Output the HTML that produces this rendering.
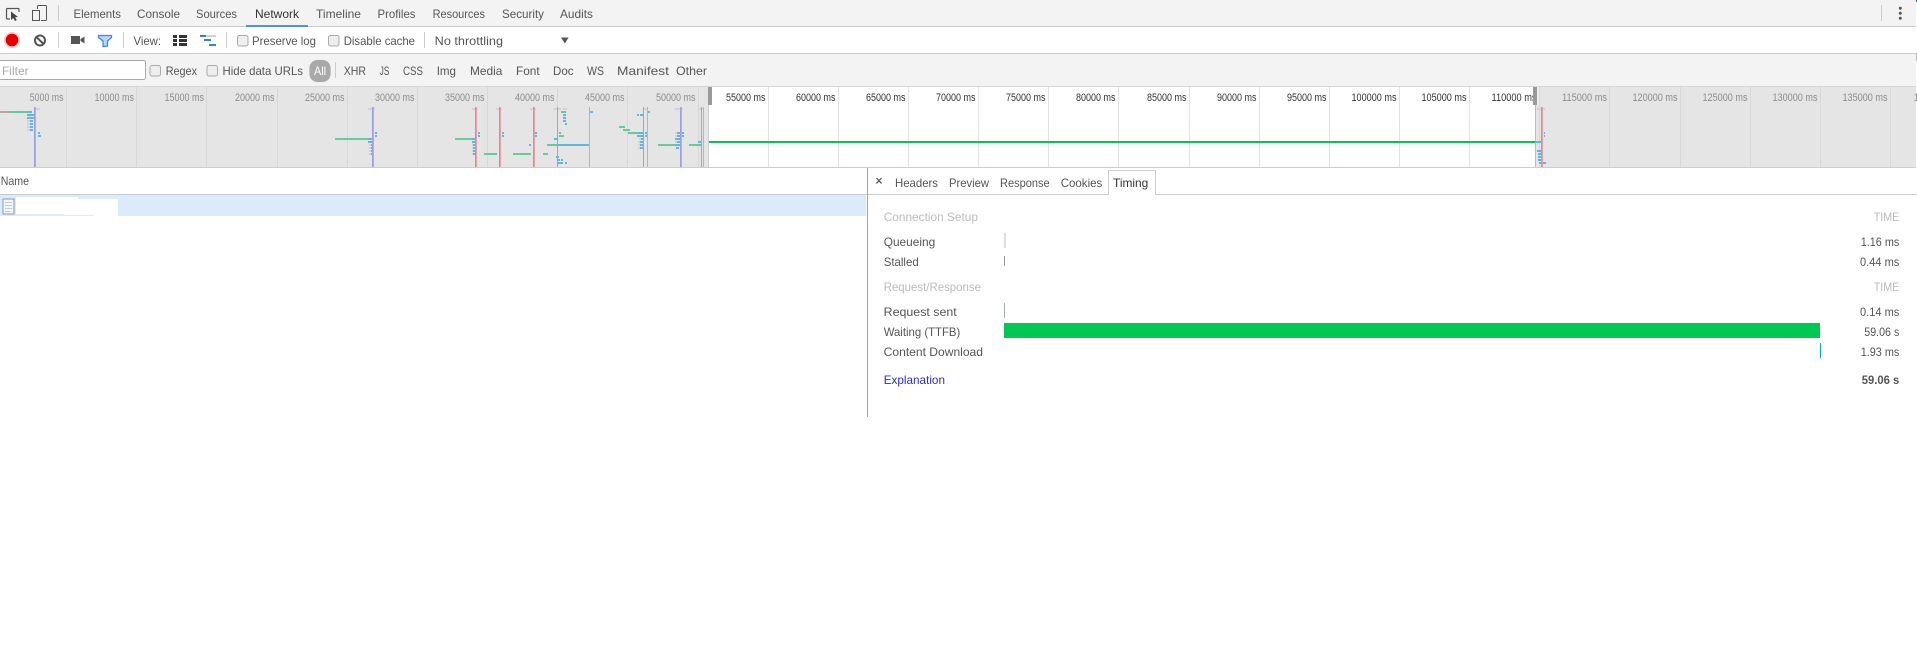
<!DOCTYPE html>
<html><head><meta charset="utf-8"><style>
html,body{margin:0;padding:0;background:#fff;width:1917px;height:648px;overflow:hidden}
svg{display:block;position:absolute;left:0;top:0}
text{font-family:"Liberation Sans",sans-serif;font-size:12px;fill:#555;white-space:pre}
.o text{font-size:11px}
.d{fill:#8c8c8c}
.h{fill:#bbb}
</style></head><body>
<svg width="1917" height="648" viewBox="0 0 1917 648" xmlns="http://www.w3.org/2000/svg">
<rect width="1917" height="648" fill="#fff"/>
<g shape-rendering="crispEdges">
<rect x="0" y="0" width="1916" height="26" fill="#f3f3f3"/>
<rect x="0" y="26" width="1916" height="1" fill="#ccc"/>
<rect x="246" y="25" width="62" height="2" fill="#4d90f0"/>
<rect x="58" y="5" width="1" height="16" fill="#ccc"/>
<rect x="1881" y="5" width="1" height="16" fill="#ccc"/>
<rect x="0" y="53" width="1916" height="1" fill="#ccc"/>
<rect x="0" y="54" width="1916" height="32" fill="#f3f3f3"/>
<rect x="58" y="32" width="1" height="16" fill="#ccc"/>
<rect x="123" y="32" width="1" height="16" fill="#ccc"/>
<rect x="226" y="32" width="1" height="16" fill="#ccc"/>
<rect x="424" y="32" width="1" height="16" fill="#ccc"/>
<rect x="335" y="62" width="1" height="16" fill="#ccc"/>
<rect x="1916" y="0" width="1" height="2" fill="#1565c0"/>
<rect x="1916" y="53" width="1" height="8" fill="#bbb"/>
<!-- overview -->
<rect x="0" y="86" width="1916" height="81" fill="#e5e5e5"/>
<rect x="709" y="87" width="826" height="80" fill="#fff"/>
<rect x="0" y="86" width="1916" height="1" fill="#d6d6d6"/>
<g fill="#d8d8d8">
<rect x="66" y="87" width="1" height="80"/><rect x="136" y="87" width="1" height="80"/><rect x="206" y="87" width="1" height="80"/><rect x="277" y="87" width="1" height="80"/><rect x="347" y="87" width="1" height="80"/><rect x="417" y="87" width="1" height="80"/><rect x="487" y="87" width="1" height="80"/><rect x="557" y="87" width="1" height="80"/><rect x="627" y="87" width="1" height="80"/><rect x="698" y="87" width="1" height="80"/>
<rect x="1539" y="87" width="1" height="80"/><rect x="1609" y="87" width="1" height="80"/><rect x="1680" y="87" width="1" height="80"/><rect x="1750" y="87" width="1" height="80"/><rect x="1820" y="87" width="1" height="80"/><rect x="1890" y="87" width="1" height="80"/>
</g>
<g fill="#e2e2e2">
<rect x="768" y="87" width="1" height="80"/><rect x="838" y="87" width="1" height="80"/><rect x="908" y="87" width="1" height="80"/><rect x="978" y="87" width="1" height="80"/><rect x="1048" y="87" width="1" height="80"/><rect x="1118" y="87" width="1" height="80"/><rect x="1189" y="87" width="1" height="80"/><rect x="1259" y="87" width="1" height="80"/><rect x="1329" y="87" width="1" height="80"/><rect x="1399" y="87" width="1" height="80"/><rect x="1469" y="87" width="1" height="80"/>
</g>
</g>
<g class="o">
<text class="d" x="29.8" y="101" textLength="33.7" lengthAdjust="spacingAndGlyphs">5000 ms</text>
<text class="d" x="94.5" y="101" textLength="39.5" lengthAdjust="spacingAndGlyphs">10000 ms</text>
<text class="d" x="164.5" y="101" textLength="39.5" lengthAdjust="spacingAndGlyphs">15000 ms</text>
<text class="d" x="235" y="101" textLength="39.5" lengthAdjust="spacingAndGlyphs">20000 ms</text>
<text class="d" x="305" y="101" textLength="39.5" lengthAdjust="spacingAndGlyphs">25000 ms</text>
<text class="d" x="375" y="101" textLength="39.5" lengthAdjust="spacingAndGlyphs">30000 ms</text>
<text class="d" x="445" y="101" textLength="39.5" lengthAdjust="spacingAndGlyphs">35000 ms</text>
<text class="d" x="515" y="101" textLength="39.5" lengthAdjust="spacingAndGlyphs">40000 ms</text>
<text class="d" x="585" y="101" textLength="39.5" lengthAdjust="spacingAndGlyphs">45000 ms</text>
<text class="d" x="656" y="101" textLength="39.5" lengthAdjust="spacingAndGlyphs">50000 ms</text>
<text x="726" y="101" textLength="39.5" lengthAdjust="spacingAndGlyphs" style="fill:#333">55000 ms</text>
<text x="796" y="101" textLength="39.5" lengthAdjust="spacingAndGlyphs" style="fill:#333">60000 ms</text>
<text x="866" y="101" textLength="39.5" lengthAdjust="spacingAndGlyphs" style="fill:#333">65000 ms</text>
<text x="936" y="101" textLength="39.5" lengthAdjust="spacingAndGlyphs" style="fill:#333">70000 ms</text>
<text x="1006" y="101" textLength="39.5" lengthAdjust="spacingAndGlyphs" style="fill:#333">75000 ms</text>
<text x="1076" y="101" textLength="39.5" lengthAdjust="spacingAndGlyphs" style="fill:#333">80000 ms</text>
<text x="1147" y="101" textLength="39.5" lengthAdjust="spacingAndGlyphs" style="fill:#333">85000 ms</text>
<text x="1217" y="101" textLength="39.5" lengthAdjust="spacingAndGlyphs" style="fill:#333">90000 ms</text>
<text x="1287" y="101" textLength="39.5" lengthAdjust="spacingAndGlyphs" style="fill:#333">95000 ms</text>
<text x="1351.5" y="101" textLength="45" lengthAdjust="spacingAndGlyphs" style="fill:#333">100000 ms</text>
<text x="1421.5" y="101" textLength="45" lengthAdjust="spacingAndGlyphs" style="fill:#333">105000 ms</text>
<text x="1491.5" y="101" textLength="45" lengthAdjust="spacingAndGlyphs" style="fill:#333">110000 ms</text>
<text class="d" x="1562" y="101" textLength="45" lengthAdjust="spacingAndGlyphs">115000 ms</text>
<text class="d" x="1632.5" y="101" textLength="45" lengthAdjust="spacingAndGlyphs">120000 ms</text>
<text class="d" x="1702.5" y="101" textLength="45" lengthAdjust="spacingAndGlyphs">125000 ms</text>
<text class="d" x="1772.5" y="101" textLength="45" lengthAdjust="spacingAndGlyphs">130000 ms</text>
<text class="d" x="1842.5" y="101" textLength="45" lengthAdjust="spacingAndGlyphs">135000 ms</text>
<text class="d" x="1913.7" y="101" textLength="45" lengthAdjust="spacingAndGlyphs">140000 ms</text>
</g>
<g shape-rendering="crispEdges">
<rect x="1917" y="0" width="0" height="0"/>
<rect x="1916" y="0" width="1" height="648" fill="#fff" opacity="0"/>
<rect x="1535" y="105" width="4" height="62" fill="#e5e5e5"/>
<rect x="1535" y="105" width="1" height="62" fill="#bdbdbd"/>
<rect x="708" y="105" width="1" height="62" fill="#cfcfcf"/>
<rect x="708" y="87" width="4" height="18" fill="#999"/>
<rect x="1533" y="87" width="4" height="18" fill="#999"/>
<rect x="1537" y="87" width="2" height="18" fill="#eee"/>
<!-- grey marks -->
<g fill="#d2d2d2">
<path d="M36 108h4v2h-4zM368 108h7v2h-7zM472 108h6v2h-6zM496 108h6v2h-6zM530 108h6v2h-6zM554 108h7v2h-7zM563 108h4v2h-4zM643 108h5v2h-5zM675 108h8v2h-8zM699 108h5v2h-5zM1537 108h8v2h-8z"/>
<path d="M27 120h3v2h-3zM27 123h3v2h-3zM27 126h3v2h-3zM27 129h3v2h-3zM369 144h2v2h-2zM369 147h2v2h-2zM369 150h2v2h-2zM369 153h2v2h-2zM472 144h1v2h-1zM472 147h1v2h-1zM472 150h1v2h-1zM472 153h1v2h-1zM639 138h2v2h-2zM638 141h2v2h-2zM638 144h2v2h-2zM638 147h2v2h-2zM675 132h2v2h-2zM675 135h2v2h-2zM675 141h2v2h-2z"/>
</g>
<rect x="0" y="111" width="10" height="2" fill="#b3a8a3"/>
<!-- green marks -->
<g fill="#66cb98">
<path d="M10 111h17v2h-17zM335 138h33v2h-33zM455 138h17v2h-17zM484 153h12v2h-12zM513 153h18v2h-18zM543 153h5v2h-5zM561 111h4v2h-4zM559 135h5v2h-5zM547 144h10v2h-10zM619 126h6v2h-6zM623 129h7v2h-7zM628 132h10v2h-10zM658 144h17v2h-17zM689 144h10v2h-10z"/>
</g>
<!-- blue marks -->
<g fill="#5cb8dc">
<path d="M27 111h5v2h-5zM27 114h7v2h-7zM27 117h7v2h-7zM30 120h3v2h-3zM30 123h3v2h-3zM30 126h3v2h-3zM30 129h3v2h-3zM38 132h2v2h-2zM38 135h3v2h-3z"/>
<path d="M368 138h4v2h-4zM368 141h4v2h-4zM371 144h1v2h-1zM371 147h1v2h-1zM371 150h1v2h-1zM371 153h1v2h-1zM375 132h2v2h-2zM375 135h2v2h-2z"/>
<path d="M472 138h3v2h-3zM472 141h3v2h-3zM473 144h2v2h-2zM473 147h2v2h-2zM473 150h2v2h-2zM473 153h2v2h-2zM478 132h2v2h-2zM478 135h2v2h-2z"/>
<path d="M502 132h2v2h-2zM502 135h2v2h-2zM496 153h1v2h-1zM535 132h2v2h-2zM535 135h2v2h-2zM529 144h2v2h-2z"/>
<path d="M565 111h1v2h-1zM590 111h3v2h-3zM563 114h3v2h-3zM563 117h3v2h-3zM563 120h3v2h-3zM565 123h2v2h-2zM559 132h2v2h-2zM554 138h3v2h-3zM557 144h32v2h-32zM556 156h3v2h-3zM558 159h2v2h-2zM561 159h2v2h-2zM557 162h6v2h-6zM565 162h2v2h-2z"/>
<path d="M648 111h2v2h-2zM637 114h2v2h-2zM640 114h3v2h-3zM638 132h5v2h-5zM645 132h2v2h-2zM637 135h6v2h-6zM645 135h2v2h-2zM641 138h2v2h-2zM640 141h3v2h-3zM640 144h3v2h-3zM640 147h3v2h-3z"/>
<path d="M677 132h3v2h-3zM682 132h2v2h-2zM677 135h3v2h-3zM682 135h2v2h-2zM675 138h5v2h-5zM677 141h3v2h-3zM675 144h5v2h-5zM676 147h3v2h-3z"/>
<path d="M703 132h1v2h-1zM703 135h1v2h-1zM698 141h3v2h-3zM699 144h2v2h-2z"/>
<path d="M1544 132h1v2h-1zM1544 135h1v2h-1zM1535 141h6v2h-6zM1537 150h4v2h-4zM1538 153h3v2h-3zM1538 156h3v2h-3zM1538 159h3v2h-3zM1539 162h7v2h-7z"/>
</g>
<!-- purple load lines -->
<g fill="#9c9fe6">
<path d="M34 107h1v60h-1zM372 107h1v60h-1zM475 107h1v60h-1zM499 107h1v60h-1zM533 107h1v60h-1zM557 107h1v60h-1zM643 107h1v60h-1zM680 107h1v60h-1zM701 107h1v60h-1zM1541 107h1v60h-1z"/>
</g>
<g fill="#e89ea6">
<path d="M35 107h1v60h-1zM373 107h1v60h-1zM476 107h1v60h-1zM500 107h1v60h-1zM534 107h1v60h-1zM589 107h1v60h-1zM647 107h1v60h-1zM681 107h1v60h-1zM703 107h1v60h-1zM1542 107h1v60h-1z"/>
</g>
<rect x="709" y="141" width="826" height="2" fill="#00c853"/>
<rect x="0" y="167" width="1916" height="1" fill="#ccc"/>
<!-- lower -->
<rect x="0" y="194" width="867" height="1" fill="#ccc"/>
<rect x="868" y="194" width="1048" height="1" fill="#ccc"/>
<rect x="0" y="195" width="866" height="21" fill="#dcebfc"/>
<rect x="867" y="168" width="1" height="249" fill="#a3a3a3"/>
<path d="M16 197h62v2h40v17h-24v-1h-30v-1h-48z" fill="#fff"/>
<rect x="3" y="199" width="11" height="15" fill="#f2f4f7" stroke="#8b98aa" stroke-width="1"/>
<g fill="#c2c8d0"><rect x="5" y="202" width="7" height="1"/><rect x="5" y="205" width="7" height="1"/><rect x="5" y="208" width="7" height="1"/><rect x="5" y="211" width="5" height="1"/></g>
<!-- tab box -->
<path d="M1108.5 194V170.5H1155.5V194" fill="#fff" stroke="#ccc"/>
<rect x="1109" y="194" width="46" height="1" fill="#fff"/>
<!-- timing bars -->
<rect x="1004" y="233" width="2" height="15" fill="#dedede"/>
<rect x="1004" y="256" width="1" height="10" fill="#999"/>
<rect x="1004" y="303" width="1" height="15" fill="#9bb0c8"/>
<rect x="1004" y="323" width="816" height="15" fill="#00c853"/>
<rect x="1820" y="343" width="1" height="15" fill="#03a9f4"/>
</g>
<!-- tabs -->
<text x="73.5" y="18" textLength="47.5" lengthAdjust="spacingAndGlyphs">Elements</text>
<text x="137" y="18" textLength="43" lengthAdjust="spacingAndGlyphs">Console</text>
<text x="196" y="18" textLength="41" lengthAdjust="spacingAndGlyphs">Sources</text>
<text x="255" y="18" textLength="44" lengthAdjust="spacingAndGlyphs" style="fill:#333">Network</text>
<text x="316" y="18" textLength="45" lengthAdjust="spacingAndGlyphs">Timeline</text>
<text x="377.5" y="18" textLength="38" lengthAdjust="spacingAndGlyphs">Profiles</text>
<text x="432.6" y="18" textLength="52.4" lengthAdjust="spacingAndGlyphs">Resources</text>
<text x="502" y="18" textLength="42" lengthAdjust="spacingAndGlyphs">Security</text>
<text x="560" y="18" textLength="33" lengthAdjust="spacingAndGlyphs">Audits</text>
<!-- icons top -->
<path d="M11 8.5H7.5Q6.5 8.5 6.5 9.5V18Q6.5 19 7.5 19H10M11 8.5H18Q19 8.5 19 9.5V12" fill="none" stroke="#555" stroke-width="1.2"/>
<path d="M11 11.5L11 20L13.2 18L15 21L16.8 20L15 17.3L18 17Z" fill="#444"/>
<rect x="32.5" y="10.5" width="7" height="10" fill="none" stroke="#555"/>
<path d="M37.5 9V6.5Q37.5 5.5 38.5 5.5H45.5Q46.5 5.5 46.5 6.5V19.5Q46.5 20.5 45.5 20.5H41" fill="none" stroke="#555"/>
<circle cx="1900.3" cy="8.3" r="1.5" fill="#555"/><circle cx="1900.3" cy="13.3" r="1.5" fill="#555"/><circle cx="1900.3" cy="18.3" r="1.5" fill="#555"/>
<!-- toolbar 2 -->
<circle cx="12" cy="40" r="8" fill="#f8c8c8"/><circle cx="12" cy="40" r="6.3" fill="#e50000"/>
<circle cx="40" cy="40.5" r="5" fill="none" stroke="#555" stroke-width="2"/><path d="M36.5 37L43.5 44" stroke="#555" stroke-width="2"/>
<path d="M71 36h9v8h-9zM80.5 39L84.5 36.5V43.5L80.5 41Z" fill="#555"/>
<path d="M98.5 35.5H111.5V37.5L107.5 41V46L103 46.5V41L98.5 37.5Z" fill="#bcd6fb" stroke="#4285f4" stroke-width="1.3"/>
<text x="133.5" y="45" textLength="27.5" lengthAdjust="spacingAndGlyphs">View:</text>
<g fill="#333" shape-rendering="crispEdges"><rect x="173" y="35" width="4" height="3"/><rect x="179" y="35" width="8" height="3"/><rect x="173" y="39" width="4" height="3"/><rect x="179" y="39" width="8" height="3"/><rect x="173" y="43" width="4" height="3"/><rect x="179" y="43" width="8" height="3"/></g>
<g shape-rendering="crispEdges"><rect x="200" y="35" width="6" height="2" fill="#3b7de0"/><rect x="206" y="35" width="10" height="2" fill="#d4d4d4"/><rect x="204" y="39" width="7" height="2" fill="#3b7de0"/><rect x="209" y="44" width="7" height="2" fill="#3b7de0"/></g>
<g fill="#eee" stroke="#aaa"><rect x="237.5" y="35.5" width="10.5" height="10.5" rx="2"/><rect x="328.5" y="35.5" width="10.5" height="10.5" rx="2"/><rect x="150" y="65.5" width="10.5" height="10.5" rx="2"/><rect x="207" y="65.5" width="10.5" height="10.5" rx="2"/></g>
<text x="252" y="45" textLength="64" lengthAdjust="spacingAndGlyphs">Preserve log</text>
<text x="343.7" y="45" textLength="71.3" lengthAdjust="spacingAndGlyphs">Disable cache</text>
<text x="434.7" y="45" textLength="68.3" lengthAdjust="spacingAndGlyphs">No throttling</text>
<path d="M561 37.5H568.6L564.8 43.5Z" fill="#555"/>
<!-- toolbar 3 -->
<rect x="-1" y="60.5" width="146.5" height="19" rx="2" fill="#fff" stroke="#a9a9a9"/>
<text x="2" y="75" textLength="26.6" lengthAdjust="spacingAndGlyphs" style="fill:#a8a8a8">Filter</text>
<text x="165.7" y="75" textLength="31.3" lengthAdjust="spacingAndGlyphs">Regex</text>
<text x="222.5" y="75" textLength="80.5" lengthAdjust="spacingAndGlyphs">Hide data URLs</text>
<rect x="309.4" y="60" width="21.2" height="22" rx="8" fill="#a9a9a9"/>
<text x="314" y="75" textLength="12" lengthAdjust="spacingAndGlyphs" style="fill:#fff">All</text>
<text x="343.7" y="75" textLength="22.3" lengthAdjust="spacingAndGlyphs">XHR</text>
<text x="379.6" y="75" textLength="9.8" lengthAdjust="spacingAndGlyphs">JS</text>
<text x="403" y="75" textLength="20" lengthAdjust="spacingAndGlyphs">CSS</text>
<text x="436.7" y="75" textLength="19.3" lengthAdjust="spacingAndGlyphs">Img</text>
<text x="470" y="75" textLength="32.4" lengthAdjust="spacingAndGlyphs">Media</text>
<text x="516" y="75" textLength="23.6" lengthAdjust="spacingAndGlyphs">Font</text>
<text x="553" y="75" textLength="20.5" lengthAdjust="spacingAndGlyphs">Doc</text>
<text x="587" y="75" textLength="17" lengthAdjust="spacingAndGlyphs">WS</text>
<text x="617" y="75" textLength="52" lengthAdjust="spacingAndGlyphs">Manifest</text>
<text x="676" y="75" textLength="31" lengthAdjust="spacingAndGlyphs">Other</text>
<!-- name -->
<text x="0.7" y="185" textLength="28.3" lengthAdjust="spacingAndGlyphs">Name</text>
<!-- details tabs -->
<path d="M876.5 178L881.5 183.5M881.5 178L876.5 183.5" stroke="#555" stroke-width="1.3"/>
<text x="895" y="187" textLength="43" lengthAdjust="spacingAndGlyphs">Headers</text>
<text x="949" y="187" textLength="40" lengthAdjust="spacingAndGlyphs">Preview</text>
<text x="1000" y="187" textLength="49.7" lengthAdjust="spacingAndGlyphs">Response</text>
<text x="1060.7" y="187" textLength="41.6" lengthAdjust="spacingAndGlyphs">Cookies</text>
<text x="1113" y="187" textLength="35.3" lengthAdjust="spacingAndGlyphs" style="fill:#333">Timing</text>
<!-- timing -->
<text class="h" x="883.7" y="221" textLength="94.3" lengthAdjust="spacingAndGlyphs">Connection Setup</text>
<text x="883.7" y="246" textLength="51.6" lengthAdjust="spacingAndGlyphs">Queueing</text>
<text x="883.7" y="266" textLength="35" lengthAdjust="spacingAndGlyphs">Stalled</text>
<text class="h" x="883.7" y="291" textLength="97.3" lengthAdjust="spacingAndGlyphs">Request/Response</text>
<text x="883.7" y="316" textLength="73" lengthAdjust="spacingAndGlyphs">Request sent</text>
<text x="883.7" y="336" textLength="76.6" lengthAdjust="spacingAndGlyphs">Waiting (TTFB)</text>
<text x="883.7" y="356" textLength="99.3" lengthAdjust="spacingAndGlyphs">Content Download</text>
<text x="883.7" y="384" textLength="61.3" lengthAdjust="spacingAndGlyphs" style="fill:#2a2ae0">Explanation</text>
<text class="h" x="1873.7" y="221" textLength="25.6" lengthAdjust="spacingAndGlyphs">TIME</text>
<text x="1860.7" y="246" textLength="38.6" lengthAdjust="spacingAndGlyphs">1.16 ms</text>
<text x="1860" y="266" textLength="39.3" lengthAdjust="spacingAndGlyphs">0.44 ms</text>
<text class="h" x="1873.7" y="291" textLength="25.6" lengthAdjust="spacingAndGlyphs">TIME</text>
<text x="1860" y="316" textLength="39.3" lengthAdjust="spacingAndGlyphs">0.14 ms</text>
<text x="1864.3" y="336" textLength="35" lengthAdjust="spacingAndGlyphs">59.06 s</text>
<text x="1860.7" y="356" textLength="38.6" lengthAdjust="spacingAndGlyphs">1.93 ms</text>
<text x="1861.7" y="384" textLength="37.6" lengthAdjust="spacingAndGlyphs" style="font-weight:bold">59.06 s</text>
</svg>
</body></html>
